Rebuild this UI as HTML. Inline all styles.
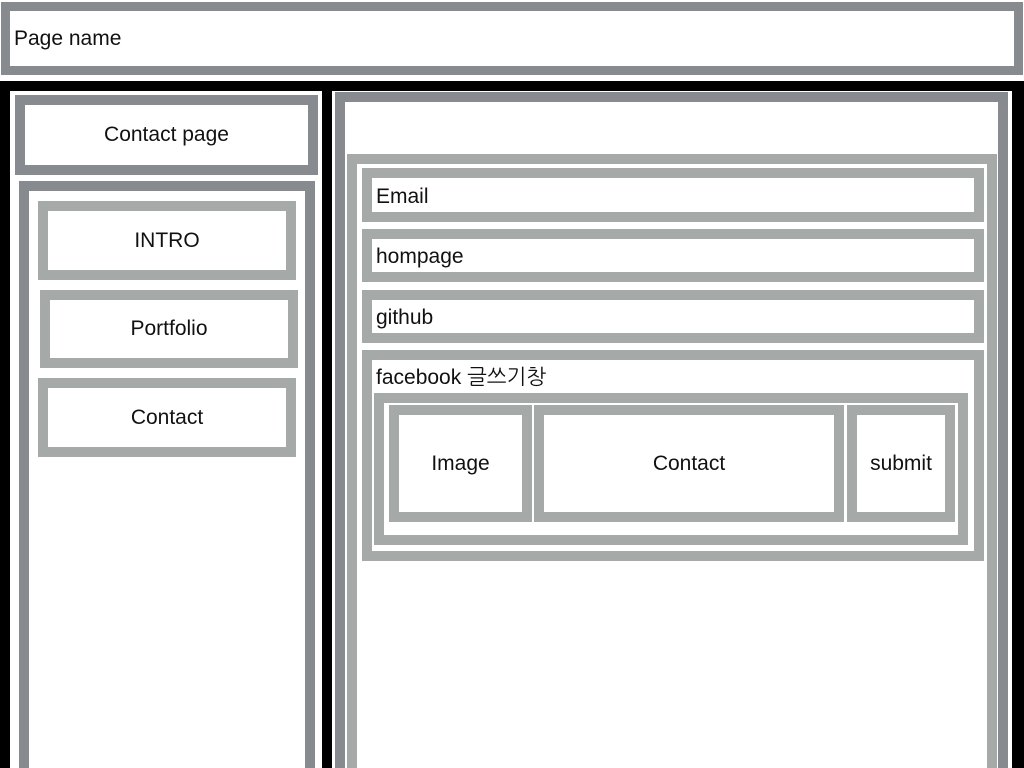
<!DOCTYPE html>
<html><head><meta charset="utf-8"><style>
html,body{margin:0;padding:0;width:1024px;height:768px;overflow:hidden;background:#fff;position:relative}
div{position:absolute;box-sizing:border-box;background:#fff;font-family:"Liberation Sans","NanumGothic","Noto Sans CJK KR",sans-serif;font-size:21px;line-height:24px;color:#111;display:flex;align-items:center;justify-content:center}
.d{border:10px solid #878a8e}
.l{border:10px solid #a5a9a7}
.t{justify-content:flex-start;padding-left:4px}
</style></head><body>
<div class="t" style="left:1px;top:2px;width:1022px;height:73px;border:9px solid #878a8e">Page name</div>
<div style="left:0;top:81px;width:1024px;height:700px;background:#000"></div>
<div style="left:10px;top:91px;width:312px;height:690px"></div>
<div style="left:332px;top:91px;width:680px;height:690px"></div>
<div class="d" style="left:15px;top:95px;width:303px;height:80px">Contact page</div>
<div class="d" style="left:19px;top:181px;width:296px;height:600px"></div>
<div class="l" style="left:38px;top:201px;width:258px;height:79px">INTRO</div>
<div class="l" style="left:40px;top:290px;width:258px;height:78px">Portfolio</div>
<div class="l" style="left:38px;top:378px;width:258px;height:79px">Contact</div>
<div class="d" style="left:335px;top:92px;width:673px;height:690px"></div>
<div class="l" style="left:347px;top:154px;width:650px;height:630px"></div>
<div class="l t" style="left:362px;top:168px;width:622px;height:54px;padding-top:3px">Email</div>
<div class="l t" style="left:362px;top:229px;width:622px;height:53px;padding-top:3px">hompage</div>
<div class="l t" style="left:362px;top:290px;width:622px;height:53px;padding-top:3px">github</div>
<div class="l t" style="left:362px;top:350px;width:622px;height:211px;align-items:flex-start;padding-top:6px">facebook 글쓰기창</div>
<div class="l" style="left:374px;top:393px;width:594px;height:152px"></div>
<div class="l" style="left:389px;top:405px;width:143px;height:117px">Image</div>
<div class="l" style="left:534px;top:405px;width:310px;height:117px">Contact</div>
<div class="l" style="left:847px;top:405px;width:108px;height:117px">submit</div>
</body></html>
